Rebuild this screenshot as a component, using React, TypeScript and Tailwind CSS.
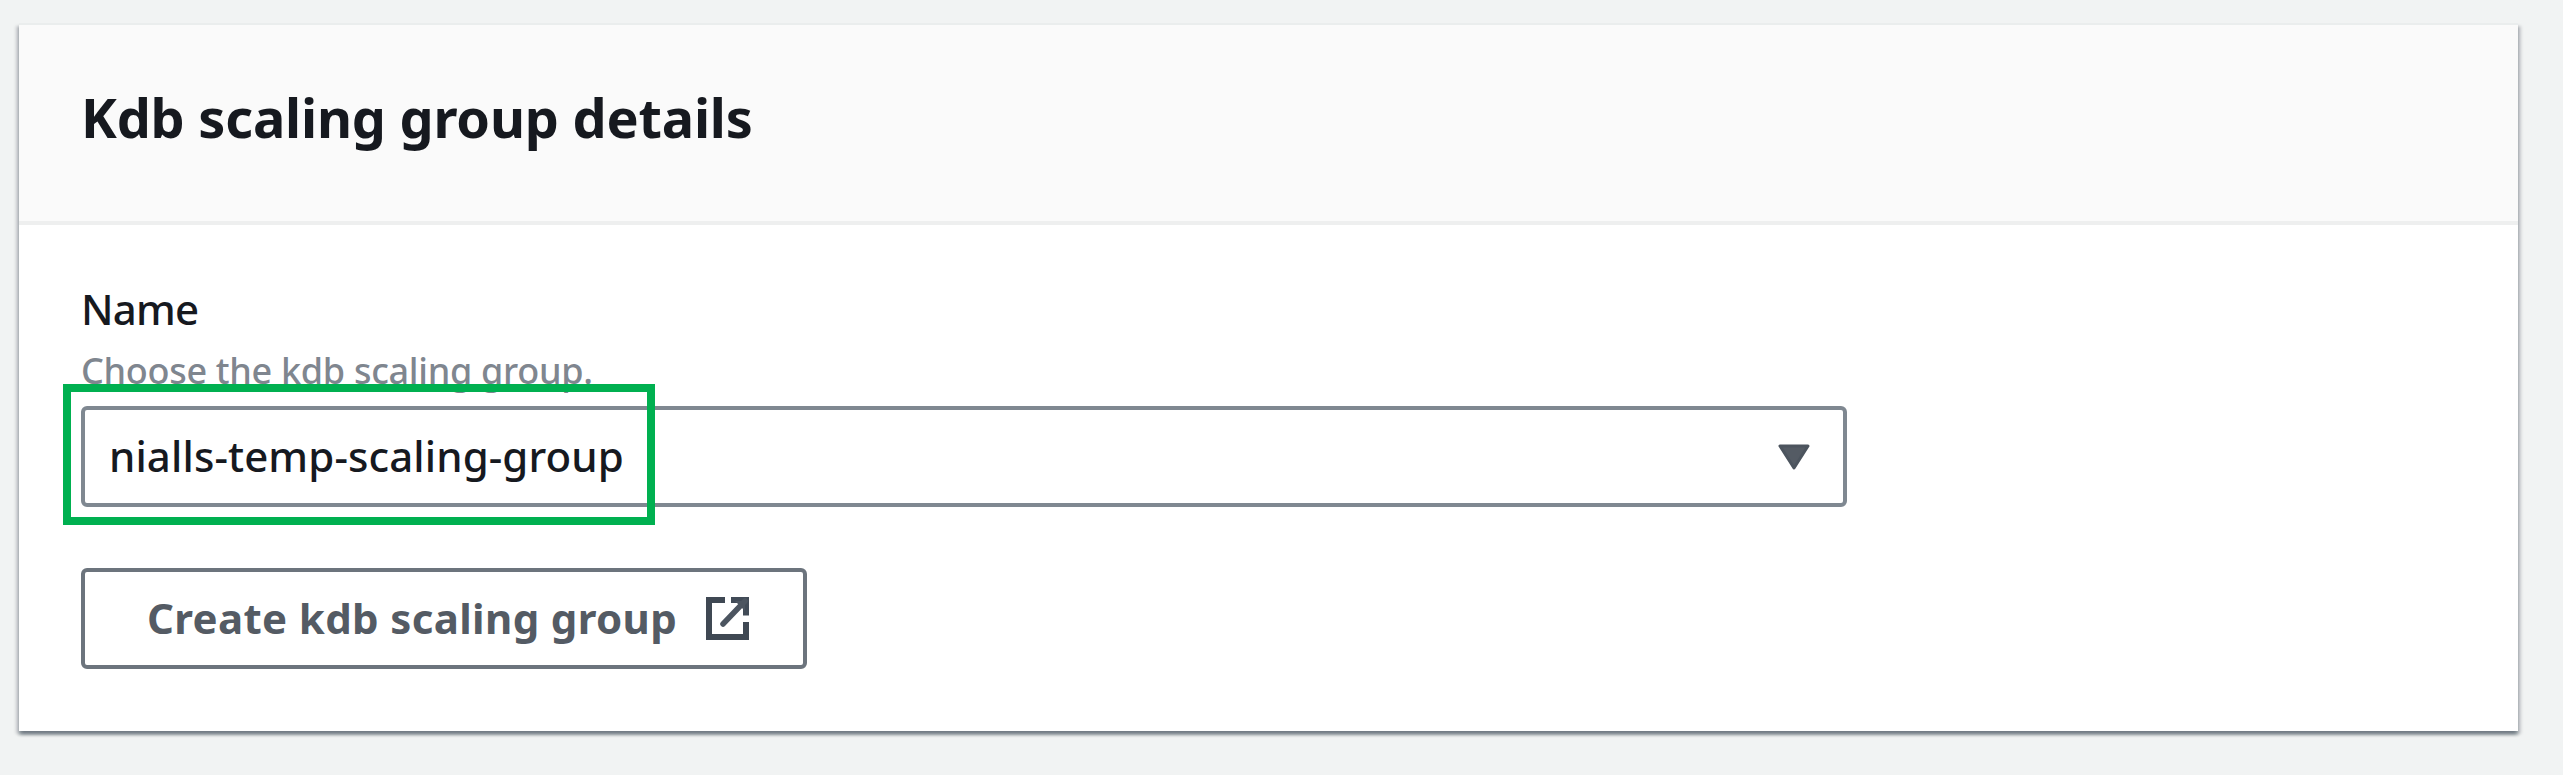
function ExternalIcon() {
  return (
    <svg className="h-[46px] w-[46px] shrink-0" viewBox="0 0 46 46" fill="none" stroke="#414b57" strokeWidth="6">
      <path d="M20 4H4V41H41V26" stroke="#3f4853" />
      <path d="M26 4h15v15.500" />
      <path d="M40 5L18 28" stroke="#4c5560" strokeLinecap="round" strokeWidth="5.500" />
      <path d="M30 5h10v10z" fill="#4c5560" stroke="none" />
    </svg>
  );
}

export default function App() {
  return (
    <div className="h-[775px] w-[2563px] overflow-hidden bg-[#f1f3f3] pt-[23px] pl-[19px] font-['Noto_Sans','Open_Sans',sans-serif]">
      <section className="flex h-[708px] w-[2499px] flex-col bg-white shadow-[0_4px_3px_0_rgba(0,28,36,0.32),3px_3px_3px_0_rgba(0,7,32,0.17),-3px_3px_3px_0_rgba(0,7,32,0.17)]">
        <header className="flex h-[202px] items-start border-t-2 border-b-4 border-t-[#eaeded] border-b-[#eeefef] bg-[#fafafa] pt-[55px] pl-[62px]">
          <h2 className="text-[54px] leading-[74px] font-bold tracking-[-0.2px] whitespace-nowrap text-[#16191f] [font-stretch:87%]">
            Kdb scaling group details
          </h2>
        </header>
        <div className="flex flex-col items-start pl-[62px]">
          <label className="mt-[54px] h-[60px] text-[42px] leading-[60px] font-medium tracking-[-0.8px] whitespace-nowrap text-[#16191f] [font-stretch:87%]">
            Name
          </label>
          <p className="mt-[7px] h-[50px] text-[36px] leading-[50px] font-medium tracking-[-0.3px] whitespace-nowrap text-[#7f868f] [font-stretch:87%]">
            Choose the kdb scaling group.
          </p>
          <div className="relative mt-[10px] flex h-[101px] w-[1766px] items-center justify-between rounded-[6px] border-4 border-[#7f8891] pr-[33px] pl-[24px]">
            <span className="-mt-[2px] text-[42px] leading-[60px] font-medium tracking-[0.1px] whitespace-nowrap text-[#16191f] [font-stretch:87%]">
              nialls-temp-scaling-group
            </span>
            <svg className="h-[26px] w-[32px]" viewBox="0 0 32 26" fill="#545b64" stroke="#4c545e" strokeWidth="3" strokeLinejoin="round">
              <path d="M2 2h28L16 24z" />
            </svg>
            <div className="pointer-events-none absolute -top-[26px] -left-[22px] h-[141px] w-[592px] border-8 border-[#00b050]" />
          </div>
          <button className="mt-[61px] flex h-[101px] w-[726px] items-center justify-between rounded-[6px] border-4 border-[#6c747d] pr-[52px] pl-[62px]">
            <span className="-mt-[2px] text-[42px] leading-[60px] font-bold tracking-[0.35px] whitespace-nowrap text-[#545b64] [font-stretch:87%]">
              Create kdb scaling group
            </span>
            <ExternalIcon />
          </button>
        </div>
      </section>
    </div>
  );
}
